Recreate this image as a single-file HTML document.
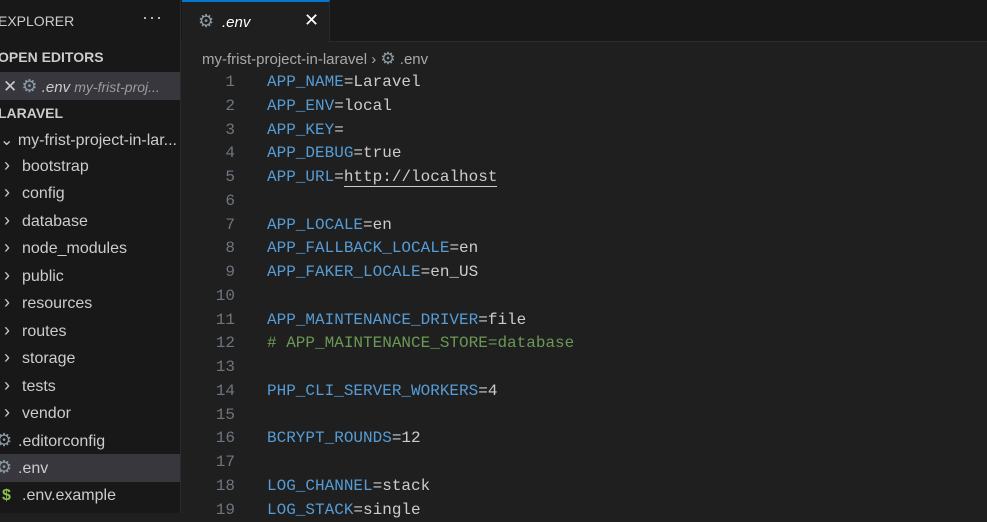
<!DOCTYPE html><html><head><style>
*{margin:0;padding:0;box-sizing:border-box}
body{width:987px;height:513px;overflow:hidden;background:#1f1f1f;font-family:"Liberation Sans",sans-serif;color:#ccc;position:relative}
#side{position:absolute;left:0;top:0;width:181px;height:513px;background:#181818;border-right:1px solid #2b2b2b}
.r{position:absolute;left:0;width:180px;height:27px;line-height:27px;font-size:16px;white-space:nowrap;overflow:hidden}
.h{font-weight:bold;font-size:14px}
.ch{display:inline-block;width:22px;text-align:left;padding-left:4px;font-size:18px;color:#ccc}
.g{color:#8b9aa3;font-size:18px}
#tabs{position:absolute;left:181px;top:0;right:0;height:42px;background:#181818;border-bottom:1px solid #2b2b2b}
#tab{position:absolute;left:1px;top:0;width:148px;height:43px;background:#1f1f1f;border-top:2px solid #0078d4;border-right:1px solid #2b2b2b;color:#fff;font-style:italic;font-size:15px}
#code{position:absolute;left:181px;top:71px;font-family:"Liberation Mono",monospace;font-size:16px}
.l{height:23.76px;line-height:23.76px;white-space:pre;position:relative}
.n{display:inline-block;width:54px;text-align:right;color:#6e7681;margin-right:32px}
.k{color:#569cd6}.c{color:#6a9955}
</style></head><body>
<div id="side">
<div class="r" style="top:8px;left:-2px;font-size:14px">EXPLORER<span style="position:absolute;left:144px;top:-4px;font-size:18px;letter-spacing:1px">···</span></div>
<div class="r h" style="top:44px;left:-2px">OPEN EDITORS</div>
<div class="r" style="top:72px;background:#37373d;height:28px;line-height:28px;font-size:15px"><span style="margin-left:3px;font-size:17px">✕</span> <span class="g">⚙</span> <i>.env</i> <i style="color:#9d9d9d;font-size:14px">my-frist-proj...</i></div>
<div class="r h" style="top:100px;left:-2px">LARAVEL</div>
<div class="r" style="top:127px">⌄ my-frist-project-in-lar...</div>
<div class="r" style="top:152px"><span class="ch">›</span>bootstrap</div>
<div class="r" style="top:179px"><span class="ch">›</span>config</div>
<div class="r" style="top:207px"><span class="ch">›</span>database</div>
<div class="r" style="top:234px"><span class="ch">›</span>node_modules</div>
<div class="r" style="top:262px"><span class="ch">›</span>public</div>
<div class="r" style="top:289px"><span class="ch">›</span>resources</div>
<div class="r" style="top:317px"><span class="ch">›</span>routes</div>
<div class="r" style="top:344px"><span class="ch">›</span>storage</div>
<div class="r" style="top:372px"><span class="ch">›</span>tests</div>
<div class="r" style="top:399px"><span class="ch">›</span>vendor</div>
<div class="r" style="top:427px"><span class="g" style="display:inline-block;width:22px;margin-left:-4px">⚙</span>.editorconfig</div>
<div class="r" style="top:454px;background:#37373d;height:28px"><span class="g" style="display:inline-block;width:22px;margin-left:-4px">⚙</span>.env</div>
<div class="r" style="top:482px"><b style="display:inline-block;width:20px;color:#8dc149;margin-left:2px">$</b>.env.example</div>
</div>
<div id="tabs"><div id="tab"><span style="position:absolute;left:16px;top:9px;color:#8b9aa3;font-style:normal;font-size:18px">⚙</span><span style="position:absolute;left:40px;top:12px">.env</span><span style="position:absolute;left:122px;top:8px;font-style:normal;font-size:18px">✕</span></div></div>
<div style="position:absolute;left:202px;top:49px;font-size:15px;color:#a9a9a9">my-frist-project-in-laravel › <span style="color:#8b9aa3;font-size:17px">⚙</span> .env</div>
<div id="code">
<div class="l"><span class="n">1</span><span class="k">APP_NAME</span>=Laravel</div>
<div class="l"><span class="n">2</span><span class="k">APP_ENV</span>=local</div>
<div class="l"><span class="n">3</span><span class="k">APP_KEY</span>=</div>
<div class="l"><span class="n">4</span><span class="k">APP_DEBUG</span>=true</div>
<div class="l"><span class="n">5</span><span class="k">APP_URL</span>=<span style="border-bottom:1px solid #ccc">http://localhost</span></div>
<div class="l"><span class="n">6</span></div>
<div class="l"><span class="n">7</span><span class="k">APP_LOCALE</span>=en</div>
<div class="l"><span class="n">8</span><span class="k">APP_FALLBACK_LOCALE</span>=en</div>
<div class="l"><span class="n">9</span><span class="k">APP_FAKER_LOCALE</span>=en_US</div>
<div class="l"><span class="n">10</span></div>
<div class="l"><span class="n">11</span><span class="k">APP_MAINTENANCE_DRIVER</span>=file</div>
<div class="l"><span class="n">12</span><span class="c"># APP_MAINTENANCE_STORE=database</span></div>
<div class="l"><span class="n">13</span></div>
<div class="l"><span class="n">14</span><span class="k">PHP_CLI_SERVER_WORKERS</span>=4</div>
<div class="l"><span class="n">15</span></div>
<div class="l"><span class="n">16</span><span class="k">BCRYPT_ROUNDS</span>=12</div>
<div class="l"><span class="n">17</span></div>
<div class="l"><span class="n">18</span><span class="k">LOG_CHANNEL</span>=stack</div>
<div class="l"><span class="n">19</span><span class="k">LOG_STACK</span>=single</div>
</div>
</body></html>
